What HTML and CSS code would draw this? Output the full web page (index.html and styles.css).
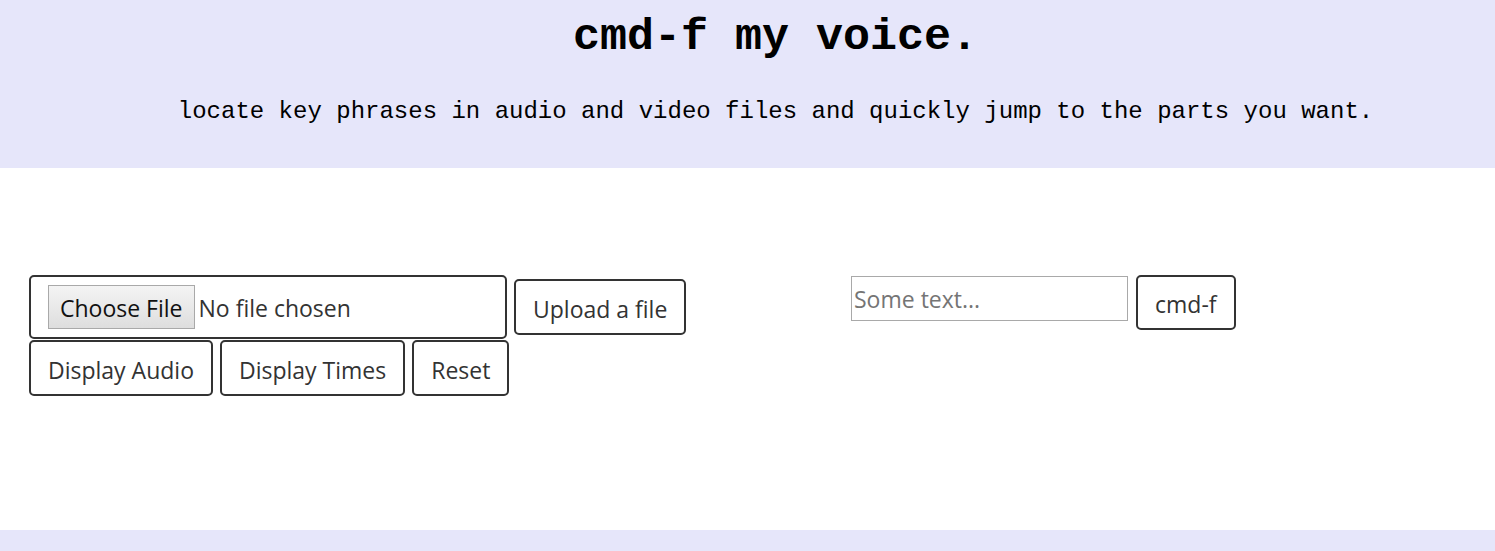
FILE: index.html
```html
<!DOCTYPE html>
<html lang="en">
<head>
<meta charset="utf-8">
<title>cmd-f my voice.</title>
<link rel="stylesheet" href="styles.css">
</head>
<body>
<header class="hero">
  <h1 class="title">cmd-f my voice.</h1>
  <p class="subtitle">locate key phrases in audio and video files and quickly jump to the parts you want.</p>
</header>
<main class="main">
  <section class="col-left">
    <div class="row">
      <input class="file-box" type="file">
      <button class="btn">Upload a file</button>
    </div>
    <div class="row row-tight">
      <button class="btn">Display Audio</button>
      <button class="btn">Display Times</button>
      <button class="btn">Reset</button>
    </div>
  </section>
  <section class="col-right">
    <input class="text-input" type="text" placeholder="Some text...">
    <button class="btn">cmd-f</button>
  </section>
</main>
<footer class="footer"></footer>
</body>
</html>
```
FILE: styles.css
```css
html, body {
  margin: 0;
  padding: 0;
  background: #ffffff;
}
body {
  font-family: "Open Sans", "Noto Sans", sans-serif;
  color: #333;
}
.hero {
  background: #e6e6fa;
  height: 168px;
  box-sizing: border-box;
  padding: 13px 0 0 56px;
  text-align: center;
}
.title {
  margin: 0;
  font-family: "Liberation Mono", "Courier New", monospace;
  font-weight: bold;
  font-size: 45px;
  line-height: 50px;
  color: #000;
}
.subtitle {
  margin: 35px 0 0;
  font-family: "Liberation Mono", "Courier New", monospace;
  font-size: 24px;
  line-height: 27px;
  color: #000;
}
.main {
  height: 362px;
  box-sizing: border-box;
  padding: 107px 0 0 29px;
  display: flex;
  align-items: flex-start;
}
.col-left {
  width: 822px;
  display: flex;
  flex-direction: column;
  gap: 1px;
}
.row {
  display: flex;
  align-items: center;
  gap: 7px;
}
.btn {
  font-family: "Open Sans", "Noto Sans", sans-serif;
  font-size: 23px;
  line-height: 30px;
  color: #333;
  background: #fff;
  border: 2px solid #333;
  border-radius: 5px;
  padding: 13px 17px 9px;
  margin: 0;
  cursor: pointer;
}
.file-box {
  width: 478px;
  height: 64px;
  box-sizing: border-box;
  border: 2px solid #333;
  border-radius: 5px;
  padding: 8px 17px;
  font-family: "Open Sans", "Noto Sans", sans-serif;
  font-size: 23px;
  color: #333;
  background: #fff;
}
.file-box::file-selector-button {
  font-family: "Open Sans", "Noto Sans", sans-serif;
  font-size: 23px;
  color: #111;
  height: 44px;
  padding: 2px 11px 0;
  margin-right: 4px;
  border: 1px solid #a9a9a9;
  border-radius: 0;
  background: linear-gradient(#f4f4f4, #dedede);
}
.col-right {
  display: flex;
  align-items: flex-start;
  gap: 8px;
}
.text-input {
  width: 277px;
  height: 45px;
  box-sizing: border-box;
  margin-top: 1px;
  border: 1px solid #a9a9a9;
  padding: 0 2px;
  font-family: "Open Sans", "Noto Sans", sans-serif;
  font-size: 23px;
  color: #333;
}
.text-input::placeholder {
  color: #757575;
}
.col-right .btn {
  padding: 12px 17px 9px;
}
.footer {
  background: #e6e6fa;
  height: 21px;
}
```
